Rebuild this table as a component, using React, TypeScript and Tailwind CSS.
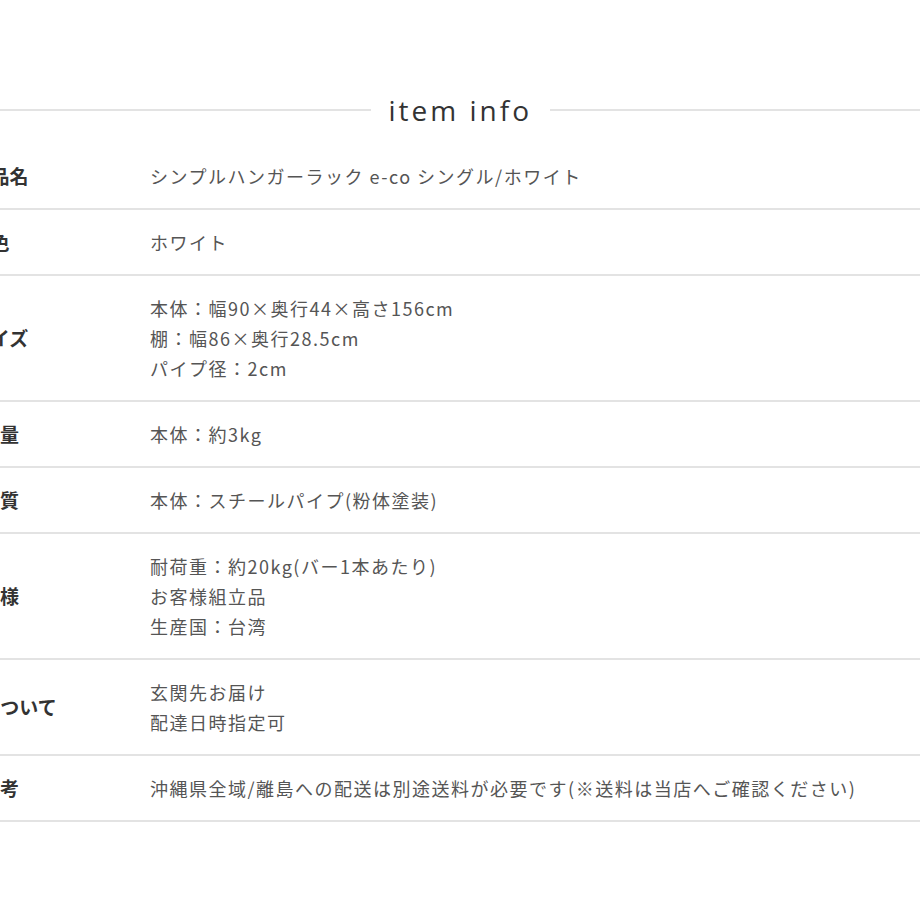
const ROWS: { label: string; lines: string[] }[] = [
  { label: '商品名', lines: ['シンプルハンガーラック e-co シングル/ホワイト'] },
  { label: '色', lines: ['ホワイト'] },
  { label: 'サイズ', lines: ['本体：幅90×奥行44×高さ156cm', '棚：幅86×奥行28.5cm', 'パイプ径：2cm'] },
  { label: '重量', lines: ['本体：約3kg'] },
  { label: '材質', lines: ['本体：スチールパイプ(粉体塗装)'] },
  { label: '仕様', lines: ['耐荷重：約20kg(バー1本あたり)', 'お客様組立品', '生産国：台湾'] },
  { label: '配送について', lines: ['玄関先お届け', '配達日時指定可'] },
  { label: '備考', lines: ['沖縄県全域/離島への配送は別途送料が必要です(※送料は当店へご確認ください)'] },
];

export default function App() {
  return (
    <div className="h-[920px] w-[920px] overflow-hidden bg-white font-['Noto_Sans_CJK_JP',sans-serif]">
      {/* ━━ タイトル ━━━━━━━━━━━━ */}
      <div className="flex items-center pt-[90px]">
        <div className="h-[2px] flex-1 bg-[#e3e3e3]" />
        <h2 className="px-[18px] font-['Open_Sans','Noto_Sans_CJK_JP',sans-serif] text-[28px] font-medium leading-[40px] tracking-[3px] text-[#333]">
          item info
        </h2>
        <div className="h-[2px] w-[370px] bg-[#e3e3e3]" />
      </div>

      {/* ━━ テーブル ━━━━━━━━━━━━ */}
      <div className="ml-[-100px] mt-[14px]">
        {ROWS.map((row) => (
          <div key={row.label} className="flex items-center border-b-2 border-[#e3e3e3] py-[17px]">
            <div className="w-[200px] shrink-0 text-center text-[19px] font-bold text-[#333]">{row.label}</div>
            <div className="ml-[50px] text-[18px] leading-[30px] tracking-[1.5px] text-[#555]">
              {row.lines.map((line) => (
                <div key={line} className="whitespace-nowrap">
                  {line}
                </div>
              ))}
            </div>
          </div>
        ))}
      </div>
    </div>
  );
}
